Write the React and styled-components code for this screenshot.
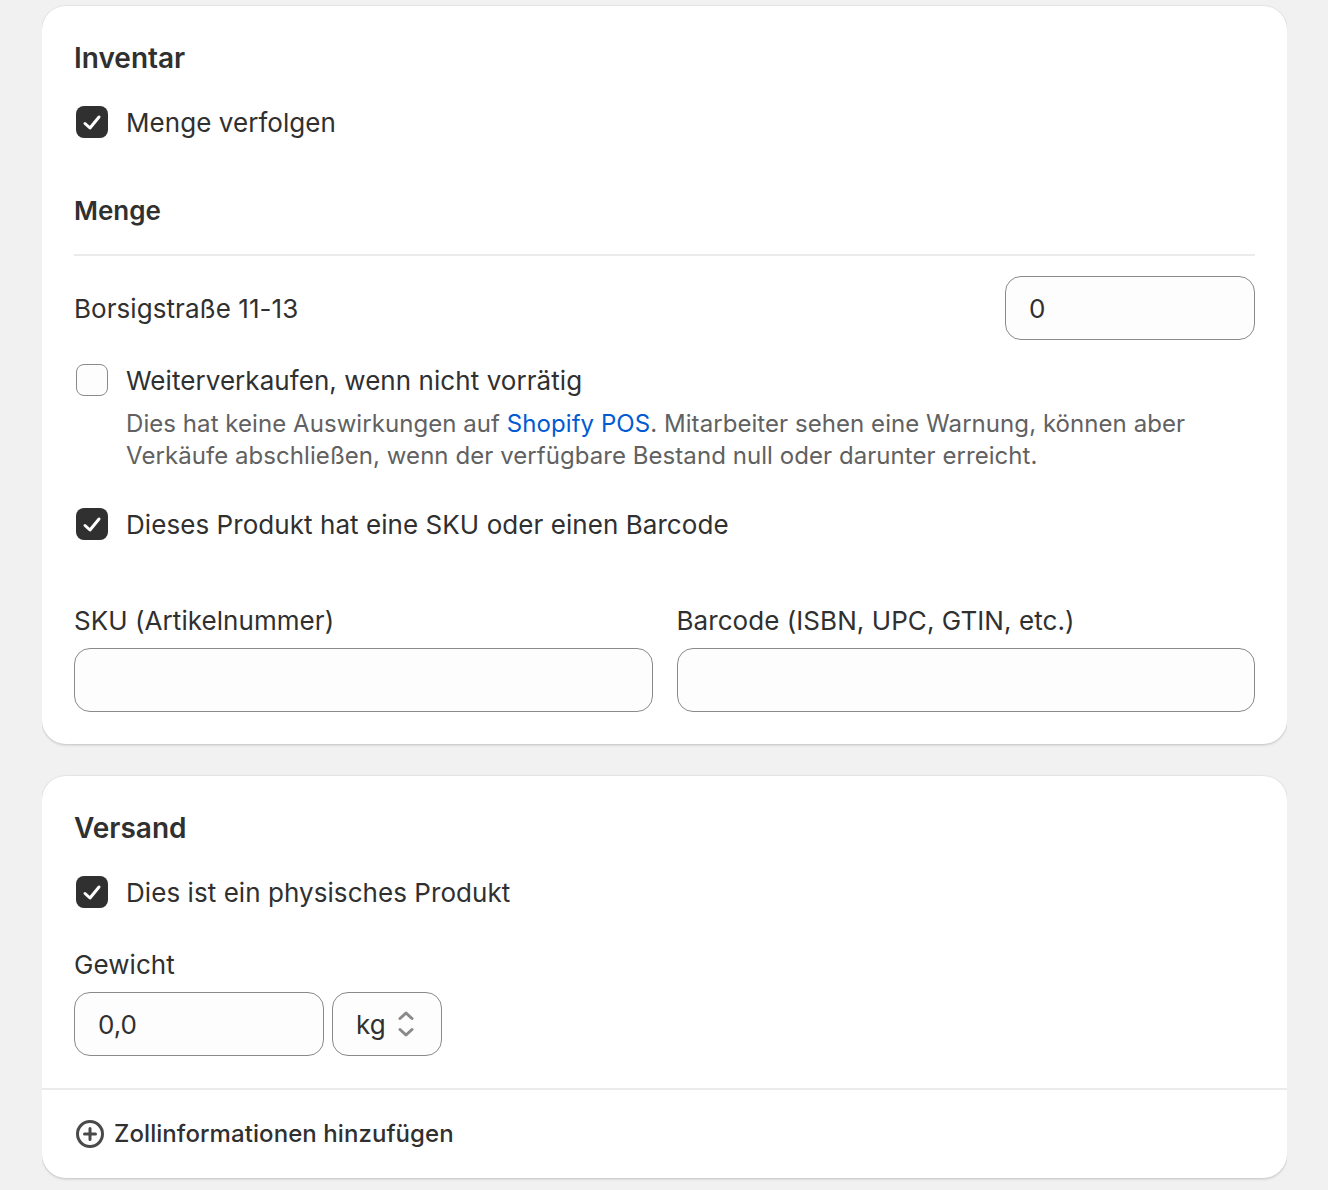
import React from 'react';
import styled, { createGlobalStyle } from 'styled-components';

const Global = createGlobalStyle`
  html, body { margin: 0; padding: 0; background: #f1f1f1; }
  body { font-family: Inter, "Liberation Sans", sans-serif; color: #303030; -webkit-font-smoothing: antialiased; }
`;

const Page = styled.div`
  display: flex;
  flex-direction: column;
  gap: 32px;
  width: 1245px;
  height: 1190px;
  box-sizing: border-box;
  margin-left: 42px;
  padding-top: 6px;
  overflow: hidden;
`;

const Card = styled.section`
  background: #fff;
  border-radius: 24px;
  box-shadow: 0 2px 2px rgba(26, 26, 26, 0.1), 0 0 0 1px rgba(0, 0, 0, 0.035), 0 0 3px rgba(0, 0, 0, 0.05);
`;

const Body = styled.div`
  display: flex;
  flex-direction: column;
  padding: 32px 32px ${p => p.$bottom}px;
`;

const Title = styled.h2`
  margin: 0;
  font-size: 28px;
  line-height: 40px;
  font-weight: 600;
`;

const SubTitle = styled.h3`
  margin: ${p => p.$top}px 0 0;
  font-size: 26px;
  line-height: 42px;
  font-weight: 600;
`;

const CheckRow = styled.label`
  display: flex;
  align-items: center;
  gap: 18px;
  margin-top: ${p => p.$top}px;
  padding-left: 2px;
  height: 40px;
`;

const Box = styled.span`
  width: 32px;
  height: 32px;
  flex: none;
  box-sizing: border-box;
  border-radius: 8px;
  display: flex;
  align-items: center;
  justify-content: center;
  background: ${p => (p.$on ? '#303030' : '#fdfdfd')};
  border: ${p => (p.$on ? 'none' : '1px solid #8a8a8a')};
`;

const Text = styled.span`
  font-size: 26px;
  line-height: 40px;
  padding-top: 2px;
  letter-spacing: 0.06px;
`;

const Divider = styled.hr`
  margin: ${p => p.$top}px 0 0;
  border: none;
  border-top: 2px solid #ebebeb;
`;

const LocationRow = styled.div`
  display: flex;
  align-items: center;
  justify-content: space-between;
  margin-top: 20px;
`;

const Field = styled.div`
  box-sizing: border-box;
  width: ${p => p.$width};
  height: 64px;
  padding: 0 23px;
  display: flex;
  align-items: center;
  gap: 10px;
  background: #fdfdfd;
  border: 1px solid #8a8a8a;
  border-radius: 16px;
  font-size: 26px;
`;

const Help = styled.p`
  margin: 8px 0 0 52px;
  font-size: 24px;
  line-height: 32px;
  color: #616161;
  letter-spacing: 0.06px;
`;

const HelpLink = styled.a`
  color: #005bd3;
`;

const Columns = styled.div`
  display: grid;
  grid-template-columns: 1fr 1fr;
  gap: 24px;
  margin-top: 56px;
`;

const FieldGroup = styled.div`
  display: flex;
  flex-direction: column;
`;

const FieldLabel = styled.div`
  font-size: 26px;
  line-height: 42px;
  margin-bottom: 6px;
  margin-top: ${p => p.$top || 0}px;
  letter-spacing: 0.06px;
`;

const WeightRow = styled.div`
  display: flex;
  gap: 8px;
`;

const Footer = styled.div`
  display: flex;
  align-items: center;
  gap: 8px;
  height: 90px;
  box-sizing: border-box;
  padding: 0 32px;
  border-top: 2px solid #ebebeb;
`;

const FooterLabel = styled.span`
  font-size: 24px;
  font-weight: 500;
  letter-spacing: 0.07px;
  padding-bottom: 2px;
`;

const Check = () => (
  <svg width="32" height="32" viewBox="0 0 32 32" fill="none">
    <path d="M9 17.5 14 22 23 11" stroke="#fff" strokeWidth="3" strokeLinecap="round" strokeLinejoin="round" />
  </svg>
);

const Chevrons = () => (
  <svg width="20" height="32" viewBox="0 0 20 32" fill="none">
    <path d="M4 10.5 10 5l6 5.5M4 21.5 10 27l6-5.5" stroke="#8a8a8a" strokeWidth="3" strokeLinecap="round" strokeLinejoin="round" />
  </svg>
);

const PlusCircle = () => (
  <svg width="32" height="32" viewBox="0 0 32 32" fill="none">
    <circle cx="16" cy="16" r="12.5" stroke="#4a4a4a" strokeWidth="3" />
    <path d="M16 10.5v11M10.5 16h11" stroke="#4a4a4a" strokeWidth="3" strokeLinecap="round" />
  </svg>
);

export default function App() {
  return (
    <>
      <Global />
      <Page>
        <Card>
          <Body $bottom={32}>
            <Title>Inventar</Title>
            <CheckRow $top={24}>
              <Box $on><Check /></Box>
              <Text>Menge verfolgen</Text>
            </CheckRow>
            <SubTitle $top={48}>Menge</SubTitle>
            <Divider $top={22} />
            <LocationRow>
              <Text>Borsigstraße 11-13</Text>
              <Field $width="250px">0</Field>
            </LocationRow>
            <CheckRow $top={20}>
              <Box />
              <Text>Weiterverkaufen, wenn nicht vorrätig</Text>
            </CheckRow>
            <Help>
              Dies hat keine Auswirkungen auf <HelpLink>Shopify POS</HelpLink>. Mitarbeiter sehen eine Warnung, können aber Verkäufe abschließen, wenn der verfügbare Bestand null oder darunter erreicht.
            </Help>
            <CheckRow $top={32}>
              <Box $on><Check /></Box>
              <Text>Dieses Produkt hat eine SKU oder einen Barcode</Text>
            </CheckRow>
            <Columns>
              <FieldGroup>
                <FieldLabel>SKU (Artikelnummer)</FieldLabel>
                <Field />
              </FieldGroup>
              <FieldGroup>
                <FieldLabel>Barcode (ISBN, UPC, GTIN, etc.)</FieldLabel>
                <Field />
              </FieldGroup>
            </Columns>
          </Body>
        </Card>
        <Card>
          <Body $bottom={32}>
            <Title>Versand</Title>
            <CheckRow $top={24}>
              <Box $on><Check /></Box>
              <Text>Dies ist ein physisches Produkt</Text>
            </CheckRow>
            <FieldLabel $top={32}>Gewicht</FieldLabel>
            <WeightRow>
              <Field $width="250px">0,0</Field>
              <Field $width="110px">kg<Chevrons /></Field>
            </WeightRow>
          </Body>
          <Footer><PlusCircle /><FooterLabel>Zollinformationen hinzufügen</FooterLabel></Footer>
        </Card>
      </Page>
    </>
  );
}
